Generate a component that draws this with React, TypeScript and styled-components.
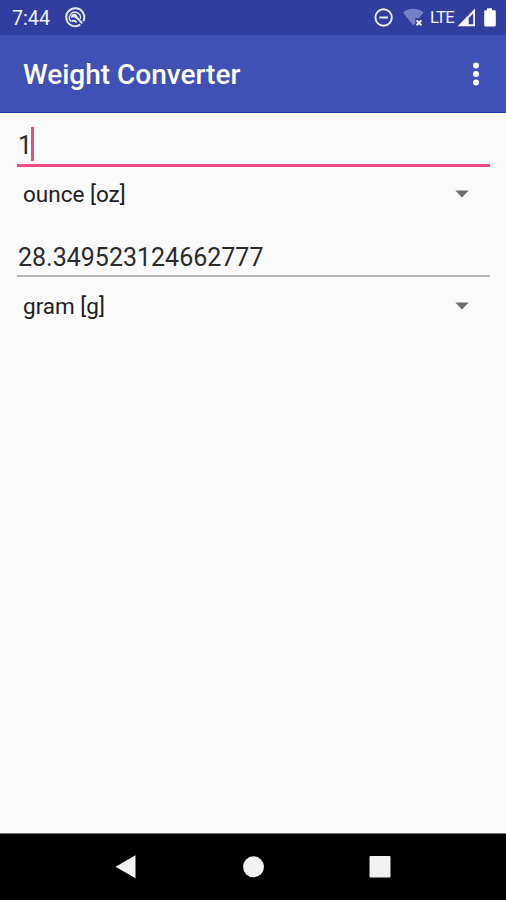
import React from "react";
import styled, { createGlobalStyle } from "styled-components";

const GlobalStyle = createGlobalStyle`
  * { box-sizing: border-box; }
  body { margin: 0; background: #fafafa; font-family: Roboto, sans-serif; }
`;

const Screen = styled.div`
  width: 506px;
  height: 900px;
  display: flex;
  flex-direction: column;
  background: #fafafa;
  overflow: hidden;
`;

const StatusBar = styled.header`
  height: 35px;
  flex: none;
  display: flex;
  justify-content: space-between;
  background: #303f9f;
  color: #f2f3fc;
`;

const Clock = styled.span`
  width: 53px;
  padding-left: 12px;
  font-size: 19.7px;
  line-height: 37px;
  white-space: nowrap;
`;

const StatusGroup = styled.div`
  display: flex;
`;

const Network = styled.span`
  width: 27px;
  font-size: 16.8px;
  line-height: 35px;
  letter-spacing: -0.8px;
`;

const Glyph = styled.svg`
  display: block;
  flex: none;
`;

const AppBar = styled.div`
  height: 78px;
  flex: none;
  display: flex;
  align-items: center;
  justify-content: space-between;
  padding: 0 15px 0 23px;
  background: #3f51b5;
  border-bottom: 1px solid #2238a0;
`;

const Title = styled.h1`
  margin: 0;
  padding-top: 3px;
  color: #fff;
  font-size: 28px;
  line-height: 34px;
  font-weight: 500;
`;

const MenuButton = styled.button`
  width: 30px;
  height: 40px;
  padding: 0;
  border: 0;
  background: none;
`;

const Form = styled.main`
  flex: 1;
  padding: 7px 16px 0 17px;
`;

const Conversion = styled.section`
  height: 111px;
`;

const Field = styled.div<{ $active?: boolean }>`
  height: ${(p) => (p.$active ? 47 : 46)}px;
  margin-bottom: ${(p) => (p.$active ? 0 : 2)}px;
  display: flex;
  align-items: center;
  padding: ${(p) => (p.$active ? 7 : 10)}px 0 0 1px;
  color: #2b2b2b;
  font-size: 25px;
  line-height: 34px;
  border-bottom: ${(p) => (p.$active ? "3px solid #f04a86" : "2px solid #b5b5b5")};
`;

const Caret = styled.i`
  width: 3px;
  height: 34px;
  margin: -4px 0 0 -1px;
  background: #f04a86;
`;

const Spinner = styled.div`
  height: 56px;
  display: flex;
  align-items: center;
  justify-content: space-between;
  padding: 0 21px 3px 6px;
  color: #1e1e1e;
  font-size: 22.5px;
  line-height: 30px;
`;

const NavBar = styled.nav`
  height: 67px;
  flex: none;
  display: flex;
  justify-content: center;
  gap: 87px;
  padding-top: 13px;
  background: #000;
  border-top: 1px solid #777;
`;

const DropArrow = () => (
  <Glyph width="14" height="8" viewBox="0 0 14 8">
    <path d="M.3.5h13.4L7 7.4z" fill="#6d6d6d" />
  </Glyph>
);

const StatusNotice = () => (
  <Glyph width="44" height="35" viewBox="53 0 44 35" fill="none" stroke="#e8eafa">
    <path d="M80.3 24.7a9 9 0 1 1 3-3.4" strokeWidth="2" />
    <path d="M71.4 21.8a5.5 5.5 0 1 1 9-3" strokeWidth="1.3" />
    <path d="M71.2 15.8c1.5-2.6 4.8-2.5 5.8-.2l1.4 4.4-2.4-1.6c-1.6-1.2-3-1.6-4.8-.6z" fill="#e8eafa" stroke="none" />
    <path d="m76.6 17.2 5.6 6.2M71.8 21.2c1.7-1 3.3-.5 4.8 1" strokeWidth="2" />
  </Glyph>
);

const DisturbAndWifi = () => (
  <Glyph width="56" height="35" viewBox="374 0 56 35">
    <circle cx="383.6" cy="17.5" r="8.2" fill="none" stroke="#eef0fc" strokeWidth="1.9" />
    <path d="M379.3 17.5h8.6" stroke="#eef0fc" strokeWidth="2" />
    <path d="M403 12.6c5.7-5 14.9-5 20.6 0l-4.3 5.5h-4v5l-2 2.5z" fill="#7581c6" />
    <path d="m416.6 20.4 4.8 4.8m0-4.8-4.8 4.8" stroke="#f5f6ff" strokeWidth="2" />
  </Glyph>
);

const SignalAndBattery = () => (
  <Glyph width="49" height="35" viewBox="457 0 49 35" fill="#f2f3fc">
    <path fillRule="evenodd" d="M457.5 26.2 475 8.6v17.6zm11.2-1.9h4.5V13.4l-4.5 4.6z" />
    <path d="M487 8.2h5v2h2.8q1 0 1 1v14q0 1.2-1.2 1.2h-9.2q-1.2 0-1.2-1.2v-14q0-1 1-1h1.8z" fill="#fff" />
  </Glyph>
);

export default function App() {
  return (
    <>
      <GlobalStyle />
      <Screen>
        <StatusBar>
          <StatusGroup>
            <Clock>7:44</Clock>
            <StatusNotice />
          </StatusGroup>
          <StatusGroup>
            <DisturbAndWifi />
            <Network>LTE</Network>
            <SignalAndBattery />
          </StatusGroup>
        </StatusBar>
        <AppBar>
          <Title>Weight Converter</Title>
          <MenuButton aria-label="More options">
            <Glyph width="30" height="40" viewBox="0 0 30 40" fill="#fff">
              <circle cx="15" cy="11.5" r="3" />
              <circle cx="15" cy="20" r="3" />
              <circle cx="15" cy="28.5" r="3" />
            </Glyph>
          </MenuButton>
        </AppBar>
        <Form>
          <Conversion>
            <Field $active>
              1<Caret />
            </Field>
            <Spinner>
              ounce [oz]
              <DropArrow />
            </Spinner>
          </Conversion>
          <Conversion>
            <Field>28.349523124662777</Field>
            <Spinner>
              gram [g]
              <DropArrow />
            </Spinner>
          </Conversion>
        </Form>
        <NavBar>
          <Glyph width="40" height="40" viewBox="0 0 40 40" fill="#f2f2f2">
            <path d="M9.5 19.7 29.5 8.2v23z" />
          </Glyph>
          <Glyph width="40" height="40" viewBox="0 0 40 40" fill="#f2f2f2">
            <circle cx="20.5" cy="19.8" r="10.5" />
          </Glyph>
          <Glyph width="40" height="40" viewBox="0 0 40 40" fill="#f2f2f2">
            <rect x="9.5" y="9" width="21" height="21.5" rx="1" />
          </Glyph>
        </NavBar>
      </Screen>
    </>
  );
}
